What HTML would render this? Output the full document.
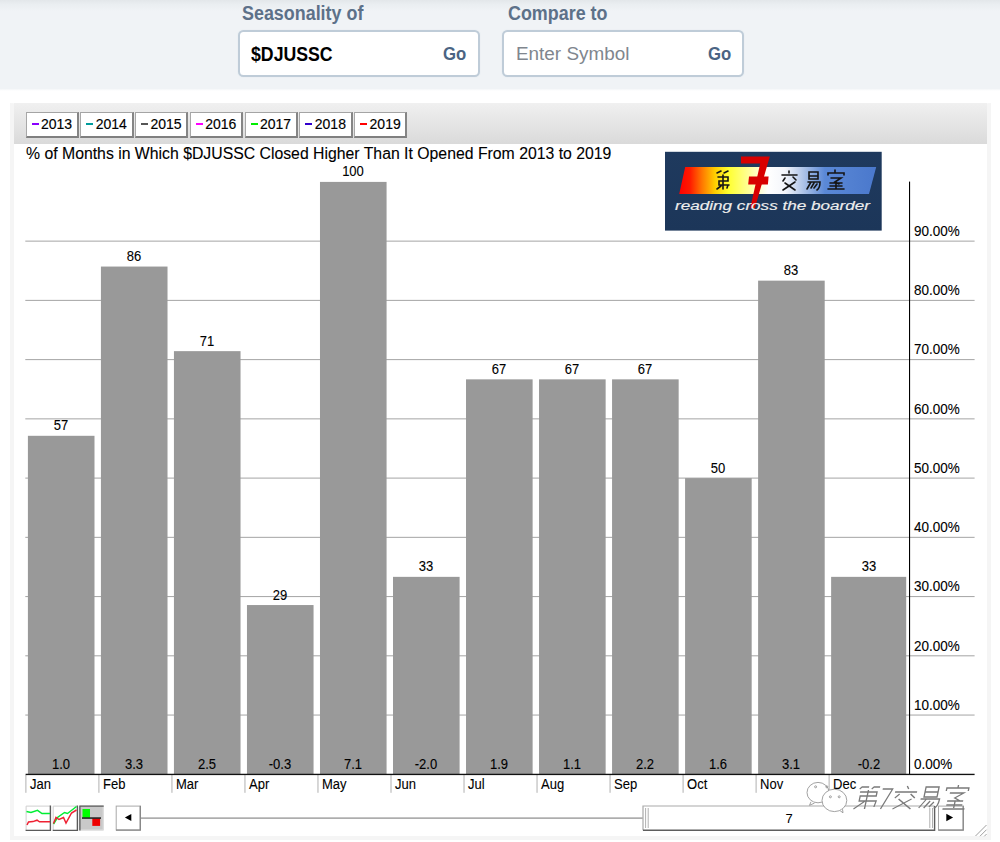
<!DOCTYPE html><html><head><meta charset="utf-8"><style>
*{margin:0;padding:0;box-sizing:border-box}
html,body{width:1000px;height:842px;overflow:hidden;background:#fff;font-family:'Liberation Sans',sans-serif;}
.a{position:absolute}
.hdr{left:0;top:0;width:1000px;height:91px;background:linear-gradient(#f0f3f6 0,#f0f3f6 88.5px,#fafbfc 90px,#fff 91px)}
.hshadow{left:0;top:0;width:1000px;height:11px;background:linear-gradient(#e3e7ea,#eaeef1 40%,#f0f3f6)}
.lbl{font-weight:bold;font-size:18px;color:#5d7189;line-height:20px;white-space:nowrap}
.box{background:#fff;border:2px solid #bfccd8;border-radius:5.5px;box-shadow:0 0 1.5px #dde5ec}
.go{font-weight:bold;font-size:17.5px;color:#4b6483;line-height:20px}
.frame{left:9.5px;top:102px;width:481px;height:738px}
.tb{left:13.5px;top:103px;width:973.5px;height:40.5px;background:linear-gradient(#f0f0f0,#dadada)}
.lb{-webkit-text-stroke:0.15px #000;top:112px;width:53.3px;height:25.6px;background:#fff;border-top:1.5px solid #a4a4a4;border-left:1.5px solid #a8a8a8;border-right:2px solid #858585;border-bottom:2px solid #808080;font-size:13px;line-height:15px;color:#000}
.lb i{position:absolute;left:5px;top:9.5px;width:7px;height:2.5px}
.lb span{position:absolute;left:14.4px;top:3.6px;font-size:14px}
.t13{font-size:14px;line-height:15px;color:#000;white-space:nowrap;-webkit-text-stroke:0.1px #000;transform:scaleX(0.93)}
.tl{transform-origin:0 50%}
.grid{left:25.3px;width:950px;height:1px;background:#a8a8a8}
.bar{background:#999}
.tick{width:1px;background:#b4b4b4;top:775px;height:18px}
</style></head><body>
<div class="a hdr"></div><div class="a hshadow"></div>
<div class="a lbl" style="left:242px;top:3px;font-size:20px;transform:scaleX(0.895);transform-origin:0 0">Seasonality of</div>
<div class="a box" style="left:238px;top:29.8px;width:242.2px;height:47.4px"></div>
<div class="a" style="left:251px;top:43.5px;font-weight:bold;font-size:20px;line-height:20px;color:#000;transform:scaleX(0.885);transform-origin:0 0">$DJUSSC</div>
<div class="a go" style="left:443px;top:43.5px;font-size:18px;transform:scaleX(0.93);transform-origin:0 0">Go</div>
<div class="a lbl" style="left:507.5px;top:3px;font-size:20px;transform:scaleX(0.895);transform-origin:0 0">Compare to</div>
<div class="a box" style="left:501.6px;top:29.8px;width:242.2px;height:47.4px"></div>
<div class="a" style="left:516px;top:44.3px;font-size:18.9px;line-height:20px;color:#80868e">Enter Symbol</div>
<div class="a go" style="left:707.5px;top:43.5px;font-size:18px;transform:scaleX(0.93);transform-origin:0 0">Go</div>
<div class="a" style="left:9.5px;top:102.5px;height:737.5px;border:4px solid #f5f5f5;border-top:1px solid #f8f8f8;width:981px"></div>
<div class="a tb"></div>
<div class="a lb" style="left:25.50px"><i style="background:#8a00ff"></i><span>2013</span></div>
<div class="a lb" style="left:80.28px"><i style="background:#009b9b"></i><span>2014</span></div>
<div class="a lb" style="left:135.06px"><i style="background:#555555"></i><span>2015</span></div>
<div class="a lb" style="left:189.84px"><i style="background:#ff00ff"></i><span>2016</span></div>
<div class="a lb" style="left:244.62px"><i style="background:#00ee00"></i><span>2017</span></div>
<div class="a lb" style="left:299.40px"><i style="background:#3300cc"></i><span>2018</span></div>
<div class="a lb" style="left:354.18px"><i style="background:#ff0000"></i><span>2019</span></div>
<div class="a" style="left:26px;top:145.2px;font-size:15.8px;line-height:18px;color:#000;white-space:nowrap;-webkit-text-stroke:0.1px #000">% of Months in Which $DJUSSC Closed Higher Than It Opened From 2013 to 2019</div>
<svg class="a" style="left:0;top:0" width="1000" height="842" viewBox="0 0 1000 842"><line x1="25.3" x2="974.6" y1="715.06" y2="715.06" stroke="#a4a4a4" stroke-width="1"/><line x1="25.3" x2="974.6" y1="655.82" y2="655.82" stroke="#a4a4a4" stroke-width="1"/><line x1="25.3" x2="974.6" y1="596.58" y2="596.58" stroke="#a4a4a4" stroke-width="1"/><line x1="25.3" x2="974.6" y1="537.34" y2="537.34" stroke="#a4a4a4" stroke-width="1"/><line x1="25.3" x2="974.6" y1="478.10" y2="478.10" stroke="#a4a4a4" stroke-width="1"/><line x1="25.3" x2="974.6" y1="418.86" y2="418.86" stroke="#a4a4a4" stroke-width="1"/><line x1="25.3" x2="974.6" y1="359.62" y2="359.62" stroke="#a4a4a4" stroke-width="1"/><line x1="25.3" x2="974.6" y1="300.38" y2="300.38" stroke="#a4a4a4" stroke-width="1"/><line x1="25.3" x2="974.6" y1="241.14" y2="241.14" stroke="#a4a4a4" stroke-width="1"/><rect x="27.90" y="435.80" width="66.60" height="338.70" fill="#999"/><line x1="25.90" x2="25.90" y1="775" y2="792.8" stroke="#b0b0b0" stroke-width="1"/><rect x="100.92" y="266.55" width="66.60" height="507.95" fill="#999"/><line x1="98.92" x2="98.92" y1="775" y2="792.8" stroke="#b0b0b0" stroke-width="1"/><rect x="173.94" y="351.15" width="66.60" height="423.35" fill="#999"/><line x1="171.94" x2="171.94" y1="775" y2="792.8" stroke="#b0b0b0" stroke-width="1"/><rect x="246.96" y="605.05" width="66.60" height="169.45" fill="#999"/><line x1="244.96" x2="244.96" y1="775" y2="792.8" stroke="#b0b0b0" stroke-width="1"/><rect x="319.98" y="181.90" width="66.60" height="592.60" fill="#999"/><line x1="317.98" x2="317.98" y1="775" y2="792.8" stroke="#b0b0b0" stroke-width="1"/><rect x="393.00" y="576.85" width="66.60" height="197.65" fill="#999"/><line x1="391.00" x2="391.00" y1="775" y2="792.8" stroke="#b0b0b0" stroke-width="1"/><rect x="466.02" y="379.35" width="66.60" height="395.15" fill="#999"/><line x1="464.02" x2="464.02" y1="775" y2="792.8" stroke="#b0b0b0" stroke-width="1"/><rect x="539.04" y="379.35" width="66.60" height="395.15" fill="#999"/><line x1="537.04" x2="537.04" y1="775" y2="792.8" stroke="#b0b0b0" stroke-width="1"/><rect x="612.06" y="379.35" width="66.60" height="395.15" fill="#999"/><line x1="610.06" x2="610.06" y1="775" y2="792.8" stroke="#b0b0b0" stroke-width="1"/><rect x="685.08" y="478.10" width="66.60" height="296.40" fill="#999"/><line x1="683.08" x2="683.08" y1="775" y2="792.8" stroke="#b0b0b0" stroke-width="1"/><rect x="758.10" y="280.65" width="66.60" height="493.85" fill="#999"/><line x1="756.10" x2="756.10" y1="775" y2="792.8" stroke="#b0b0b0" stroke-width="1"/><rect x="831.12" y="576.85" width="75.08" height="197.65" fill="#999"/><line x1="829.12" x2="829.12" y1="775" y2="792.8" stroke="#b0b0b0" stroke-width="1"/><rect x="909" y="181.6" width="1.1" height="593" fill="#000"/><rect x="25.6" y="773.75" width="949" height="1.35" fill="#111"/></svg>
<div class="a t13" style="left:21.20px;width:80px;text-align:center;top:418.30px">57</div>
<div class="a t13" style="left:21.20px;width:80px;text-align:center;top:756.5px">1.0</div>
<div class="a t13 tl" style="left:30.10px;top:776.6px">Jan</div>
<div class="a t13" style="left:94.22px;width:80px;text-align:center;top:249.05px">86</div>
<div class="a t13" style="left:94.22px;width:80px;text-align:center;top:756.5px">3.3</div>
<div class="a t13 tl" style="left:103.12px;top:776.6px">Feb</div>
<div class="a t13" style="left:167.24px;width:80px;text-align:center;top:333.65px">71</div>
<div class="a t13" style="left:167.24px;width:80px;text-align:center;top:756.5px">2.5</div>
<div class="a t13 tl" style="left:176.14px;top:776.6px">Mar</div>
<div class="a t13" style="left:240.26px;width:80px;text-align:center;top:587.55px">29</div>
<div class="a t13" style="left:240.26px;width:80px;text-align:center;top:756.5px">-0.3</div>
<div class="a t13 tl" style="left:249.16px;top:776.6px">Apr</div>
<div class="a t13" style="left:313.28px;width:80px;text-align:center;top:164.40px">100</div>
<div class="a t13" style="left:313.28px;width:80px;text-align:center;top:756.5px">7.1</div>
<div class="a t13 tl" style="left:322.18px;top:776.6px">May</div>
<div class="a t13" style="left:386.30px;width:80px;text-align:center;top:559.35px">33</div>
<div class="a t13" style="left:386.30px;width:80px;text-align:center;top:756.5px">-2.0</div>
<div class="a t13 tl" style="left:395.20px;top:776.6px">Jun</div>
<div class="a t13" style="left:459.32px;width:80px;text-align:center;top:361.85px">67</div>
<div class="a t13" style="left:459.32px;width:80px;text-align:center;top:756.5px">1.9</div>
<div class="a t13 tl" style="left:468.22px;top:776.6px">Jul</div>
<div class="a t13" style="left:532.34px;width:80px;text-align:center;top:361.85px">67</div>
<div class="a t13" style="left:532.34px;width:80px;text-align:center;top:756.5px">1.1</div>
<div class="a t13 tl" style="left:541.24px;top:776.6px">Aug</div>
<div class="a t13" style="left:605.36px;width:80px;text-align:center;top:361.85px">67</div>
<div class="a t13" style="left:605.36px;width:80px;text-align:center;top:756.5px">2.2</div>
<div class="a t13 tl" style="left:614.26px;top:776.6px">Sep</div>
<div class="a t13" style="left:678.38px;width:80px;text-align:center;top:460.60px">50</div>
<div class="a t13" style="left:678.38px;width:80px;text-align:center;top:756.5px">1.6</div>
<div class="a t13 tl" style="left:687.28px;top:776.6px">Oct</div>
<div class="a t13" style="left:751.40px;width:80px;text-align:center;top:263.15px">83</div>
<div class="a t13" style="left:751.40px;width:80px;text-align:center;top:756.5px">3.1</div>
<div class="a t13 tl" style="left:760.30px;top:776.6px">Nov</div>
<div class="a t13" style="left:828.66px;width:80px;text-align:center;top:559.35px">33</div>
<div class="a t13" style="left:828.66px;width:80px;text-align:center;top:756.5px">-0.2</div>
<div class="a t13 tl" style="left:833.32px;top:776.6px">Dec</div>
<div class="a t13 tl" style="left:914.3px;top:757.10px;font-size:14.5px">0.00%</div>
<div class="a t13 tl" style="left:914.3px;top:697.86px;font-size:14.5px">10.00%</div>
<div class="a t13 tl" style="left:914.3px;top:638.62px;font-size:14.5px">20.00%</div>
<div class="a t13 tl" style="left:914.3px;top:579.38px;font-size:14.5px">30.00%</div>
<div class="a t13 tl" style="left:914.3px;top:520.14px;font-size:14.5px">40.00%</div>
<div class="a t13 tl" style="left:914.3px;top:460.90px;font-size:14.5px">50.00%</div>
<div class="a t13 tl" style="left:914.3px;top:401.66px;font-size:14.5px">60.00%</div>
<div class="a t13 tl" style="left:914.3px;top:342.42px;font-size:14.5px">70.00%</div>
<div class="a t13 tl" style="left:914.3px;top:283.18px;font-size:14.5px">80.00%</div>
<div class="a t13 tl" style="left:914.3px;top:223.94px;font-size:14.5px">90.00%</div>
<svg class="a" style="left:0;top:0" width="1000" height="842" viewBox="0 0 1000 842"><defs><linearGradient id="band" gradientUnits="userSpaceOnUse" x1="679" y1="0" x2="877" y2="0"><stop offset="0" stop-color="#ff0000"/><stop offset="0.055" stop-color="#ff1a00"/><stop offset="0.116" stop-color="#ff7700"/><stop offset="0.18" stop-color="#ffcc00"/><stop offset="0.25" stop-color="#ffff30"/><stop offset="0.36" stop-color="#ffffa0"/><stop offset="0.45" stop-color="#ffffff"/><stop offset="0.535" stop-color="#f4f6fb"/><stop offset="0.636" stop-color="#a8bfe6"/><stop offset="0.737" stop-color="#5a88d6"/><stop offset="1" stop-color="#4a78cc"/></linearGradient><linearGradient id="navy" x1="0" y1="0" x2="0" y2="1"><stop offset="0" stop-color="#1f3a5e"/><stop offset="1" stop-color="#1c3659"/></linearGradient></defs><rect x="665" y="151.8" width="216.7" height="78.8" fill="url(#navy)"/><polygon points="685.2,167 876.2,167 869,193.9 679.2,193.9" fill="url(#band)"/><g stroke="#151515" stroke-width="1.6" fill="none" stroke-linecap="round"><path d="M717 173 l4 -2 M724 173 l4 -2 M718 177 h10 v4 h-9 v4 h10 M723 175 v14 M721 186 l-4 3 M728 185 l-1 3"/><path d="M789 171 v2 M782 175 h15 M785 178 l-2 3 M793 177 l3 3 M785 183 l10 7 M795 182 l-12 8"/><path d="M809 172 h9 v7 h-9 z M809 176 h9 M808 182 h12 q0 6 -3 8 M811 182 l-4 7 M814 183 l-3 5 M817 184 l-3 4"/><path d="M835 170 v2 M828 175 v-2 h16 v2 M831 178 h10 l-6 4 l4 2 M830 183 h12 M836 183 v6 M830 186 h12 M828 189 h16"/></g><path d="M741 156.6 H769.8 L754.8 208.3 H750.2 L760.2 163.4 H741 Z" fill="#d80000"/><path d="M749 176.6 H768.6 L767.9 184.4 H748.2 Z" fill="#d80000"/><text x="675" y="209.6" font-family="Liberation Sans" font-style="italic" font-size="12.5" fill="#eeeeee" stroke="#eeeeee" stroke-width="0.15" textLength="195" lengthAdjust="spacingAndGlyphs">reading cross the boarder</text><rect x="25.6" y="805.6" width="25" height="25" fill="#fff"/><path d="M26.1 830.4 V806.1 H50.4" stroke="#cfcfcf" stroke-width="1" fill="none"/><path d="M50.4 805.6 V830.4 H25.6" stroke="#5a5a5a" stroke-width="1.4" fill="none"/><polyline points="26.5,811.5 31,812.5 37.5,810.3 42,813.5 50,813.5" stroke="#00ee33" stroke-width="1.5" fill="none"/><polyline points="27,825 28.5,822 33,821.6 37,820.2 39.5,821.8 50,821.8" stroke="#ee2233" stroke-width="1.5" fill="none"/><rect x="52.7" y="805.6" width="25" height="25" fill="#fff"/><path d="M53.2 830.4 V806.1 H77.4" stroke="#cfcfcf" stroke-width="1" fill="none"/><path d="M77.4 805.6 V830.4 H52.7" stroke="#5a5a5a" stroke-width="1.4" fill="none"/><polyline points="53.5,824 57.5,817.5 64.5,812.5 67.5,813.5 76.5,806.5" stroke="#00ee33" stroke-width="1.5" fill="none"/><polyline points="53.5,823.5 56,817.5 59,819.5 63.5,817.5 66,823 71.5,813 76.5,810" stroke="#ee2233" stroke-width="1.5" fill="none"/><rect x="79.3" y="805.6" width="24.4" height="24.8" fill="#c9c9c9"/><path d="M103.2 806 V830 H79.5" stroke="#e0e0e0" stroke-width="1" fill="none"/><path d="M79.9 830.4 V806.2 H103.7" stroke="#5a5a5a" stroke-width="1.3" fill="none"/><rect x="82.5" y="809" width="7.5" height="8.6" fill="#00ff00"/><rect x="92.3" y="818.6" width="7.8" height="7.3" fill="#ee0000"/><rect x="82" y="817.4" width="19" height="1.3" fill="#000"/><rect x="116.2" y="806.1" width="23.8" height="23.9" fill="#fff" stroke="#a8a8a8" stroke-width="1"/><path d="M116 830.2 H140.4 V805.8" stroke="#888" stroke-width="1.2" fill="none"/><polygon points="124.9,817.5 131.3,813.9 131.3,821.1" fill="#000"/><rect x="141" y="817.5" width="502" height="1.2" fill="#8a8a8a"/><rect x="642.8" y="806" width="292" height="24.3" fill="#fff"/><path d="M643 830.3 V806 H934.6" stroke="#a9a9a9" stroke-width="1.2" fill="none"/><path d="M934.6 806 V830.3 H643" stroke="#5e5e5e" stroke-width="1.4" fill="none"/><path d="M645.6 808 V828 M648.2 808 V828 M929.8 808 V828 M932.5 808 V828" stroke="#b0b0b0" stroke-width="1" fill="none"/><text x="789.2" y="822.5" font-family="Liberation Sans" font-size="13" text-anchor="middle" fill="#000">7</text><rect x="938.5" y="806.1" width="24.5" height="23.9" fill="#fff" stroke="#a8a8a8" stroke-width="1"/><path d="M938.3 830.2 H963.3 V805.8" stroke="#888" stroke-width="1.2" fill="none"/><polygon points="953.1,817.5 946.3,813.8 946.3,821.2" fill="#000"/><path d="M975.5 836 L986.5 825 M980 836.2 L986.5 829.7 M984.3 836.3 L986.6 834" stroke="#a0a0a0" stroke-width="1" fill="none"/><g stroke="#8a8a8a" stroke-width="0.8"><ellipse cx="818" cy="792.6" rx="11" ry="10.2" fill="none"/><path d="M811 801.8 l-1.5 3.5 l5 -2.2" fill="#fff"/><ellipse cx="834.4" cy="800.4" rx="12.4" ry="11.2" fill="#fff"/><path d="M840 810.6 l3 2.2 l-0.5 -3.6" fill="#fff"/><circle cx="815.6" cy="786.8" r="1" fill="none"/><circle cx="826.8" cy="786.8" r="1" fill="none"/><circle cx="830.4" cy="796.8" r="1" fill="none"/><circle cx="839.2" cy="796.8" r="1" fill="none"/></g><g stroke="#7a7a7a" stroke-width="1.35" fill="none" stroke-linecap="butt" transform="translate(912 797) skewX(-12) translate(-912 -797)"><path d="M858 789 l2 -2 h7 M870 789 l2 -2 h6 M859 792 h17 v4 h-16 v5 h17 l-1 6 M867 790 v19 M866 801 l-10 8 M875 801 v0"/><path d="M881 789 h10 l-8 20"/><path d="M905 786 l2 3 M894 792 h22 M899 794 l-4 4 M910 794 l5 4 M899 799 l14 10 M912 799 l-17 10"/><path d="M924 787 h13 v10 h-13 z M924 792 h13 M921 799 h19 q0 8 -4 9 M927 799 l-6 9 M931 801 l-5 7 M935 802 l-4 5"/><path d="M956 785 v3 M945 791 v-3 h22 v3 M949 793 h14 l-8 5 l6 3 M948 801 h16 M956 801 v7 M948 805 h16 M945 809 h22"/></g></svg>
</body></html>
